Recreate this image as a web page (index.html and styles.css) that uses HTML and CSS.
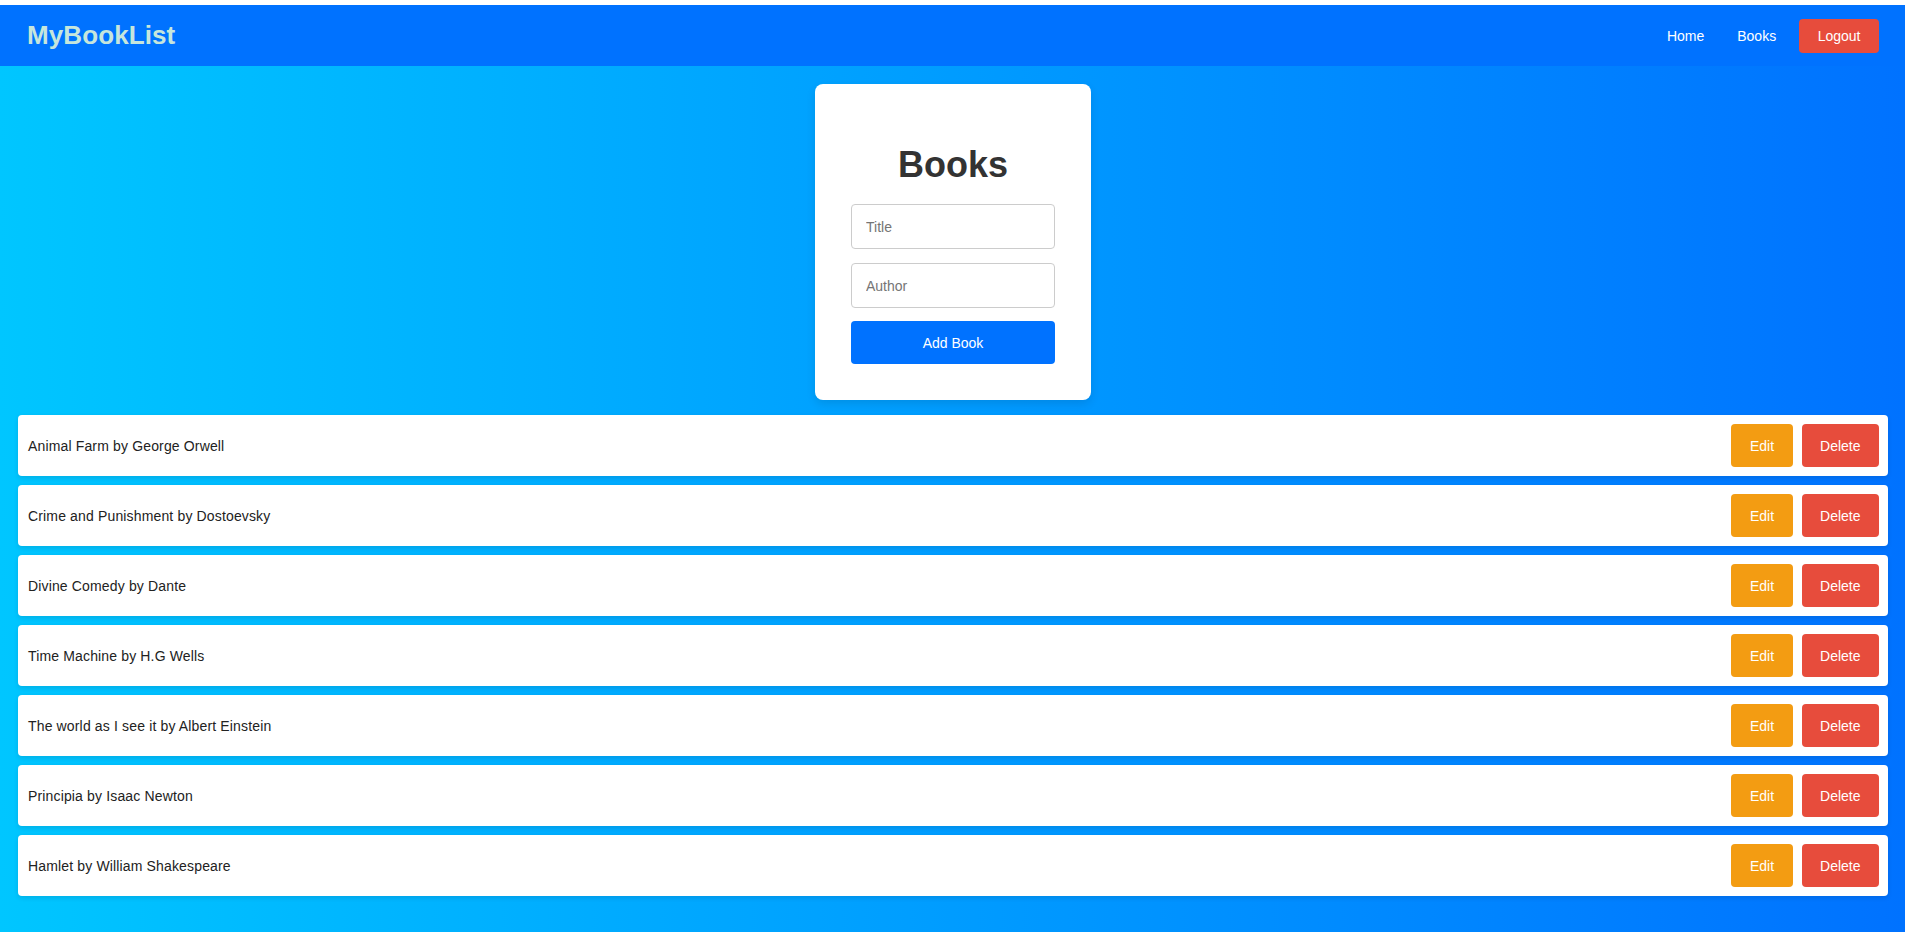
FILE: index.html
```html
<!DOCTYPE html>
<html lang="en">
<head>
<meta charset="utf-8">
<title>MyBookList</title>
<link rel="stylesheet" href="styles.css">
</head>
<body>
<div class="page">
  <nav class="navbar">
    <div class="logo">MyBookList</div>
    <div class="nav-links">
      <a class="nav-link nav-home" href="#">Home</a>
      <a class="nav-link nav-books" href="#">Books</a>
      <button class="btn btn-logout">Logout</button>
    </div>
  </nav>
  <main class="main">
    <section class="form-card">
      <h2 class="form-title">Books</h2>
      <input class="field field-title" type="text" placeholder="Title">
      <input class="field field-author" type="text" placeholder="Author">
      <button class="btn btn-add">Add Book</button>
    </section>
    <ul class="book-list">
      <li class="book"><span class="book-text">Animal Farm by George Orwell</span><div class="actions"><button class="btn btn-edit">Edit</button><button class="btn btn-delete">Delete</button></div></li>
      <li class="book"><span class="book-text">Crime and Punishment by Dostoevsky</span><div class="actions"><button class="btn btn-edit">Edit</button><button class="btn btn-delete">Delete</button></div></li>
      <li class="book"><span class="book-text">Divine Comedy by Dante</span><div class="actions"><button class="btn btn-edit">Edit</button><button class="btn btn-delete">Delete</button></div></li>
      <li class="book"><span class="book-text">Time Machine by H.G Wells</span><div class="actions"><button class="btn btn-edit">Edit</button><button class="btn btn-delete">Delete</button></div></li>
      <li class="book"><span class="book-text">The world as I see it by Albert Einstein</span><div class="actions"><button class="btn btn-edit">Edit</button><button class="btn btn-delete">Delete</button></div></li>
      <li class="book"><span class="book-text">Principia by Isaac Newton</span><div class="actions"><button class="btn btn-edit">Edit</button><button class="btn btn-delete">Delete</button></div></li>
      <li class="book"><span class="book-text">Hamlet by William Shakespeare</span><div class="actions"><button class="btn btn-edit">Edit</button><button class="btn btn-delete">Delete</button></div></li>
    </ul>
  </main>
</div>
</body>
</html>
```
FILE: styles.css
```css
* { box-sizing: border-box; }
html, body { margin: 0; padding: 0; background: #fff; }
body {
  font-family: "Liberation Sans", Arial, sans-serif;
  font-size: 14px;
  padding-top: 5px;
}
.page {
  min-height: calc(100vh - 5px);
  background: linear-gradient(to right, #00c6ff, #0072ff);
  display: flex;
  flex-direction: column;
}
.navbar {
  height: 61px;
  background: #0072ff;
  display: flex;
  align-items: center;
  justify-content: space-between;
  padding: 0 26px 0 27px;
}
.logo {
  font-size: 26px;
  font-weight: bold;
  color: #c6e6dc;
  letter-spacing: 0.1px;
}
.nav-links { display: flex; align-items: center; }
.nav-link {
  color: #fff;
  text-decoration: none;
  font-size: 14px;
}
.nav-home { margin-right: 33px; }
.nav-books { margin-right: 23px; }
.btn {
  font-family: "Liberation Sans", Arial, sans-serif;
  font-size: 14px;
  color: #fff;
  border: none;
  border-radius: 4px;
  padding: 0 18.5px;
  cursor: pointer;
}
.btn-logout { height: 34px; background: #e74c3c; }
.main { padding: 18px 17px 0 18px; }
.form-card {
  width: 276px;
  margin: 0 auto 15px;
  background: #fff;
  border-radius: 8px;
  padding: 36px;
  box-shadow: 0 4px 10px rgba(0, 0, 0, 0.1);
  display: flex;
  flex-direction: column;
}
.form-title {
  margin: 25px 0 19px;
  font-size: 36px;
  line-height: 40px;
  text-align: center;
  color: #333;
}
.field {
  width: 204px;
  height: 45px;
  border: 1px solid #ccc;
  border-radius: 4px;
  padding: 0 14px;
  font-family: "Liberation Sans", Arial, sans-serif;
  font-size: 14px;
  color: #333;
}
.field::placeholder { color: #757575; }
.field-title { margin-bottom: 14px; }
.field-author { margin-bottom: 13px; }
.btn-add {
  width: 204px;
  height: 43px;
  background: #0072ff;
}
.book-list { list-style: none; margin: 0; padding: 0; }
.book {
  height: 61px;
  margin-bottom: 9px;
  background: #fff;
  border-radius: 4px;
  box-shadow: 0 2px 5px rgba(0, 0, 0, 0.1);
  display: flex;
  align-items: center;
  justify-content: space-between;
  padding: 0 9px 0 10px;
}
.book-text { color: #222; font-size: 14px; letter-spacing: 0.15px; }
.actions { display: flex; gap: 9px; }
.btn-edit { height: 43px; background: #f39c12; }
.btn-delete { height: 43px; background: #e74c3c; }
```
